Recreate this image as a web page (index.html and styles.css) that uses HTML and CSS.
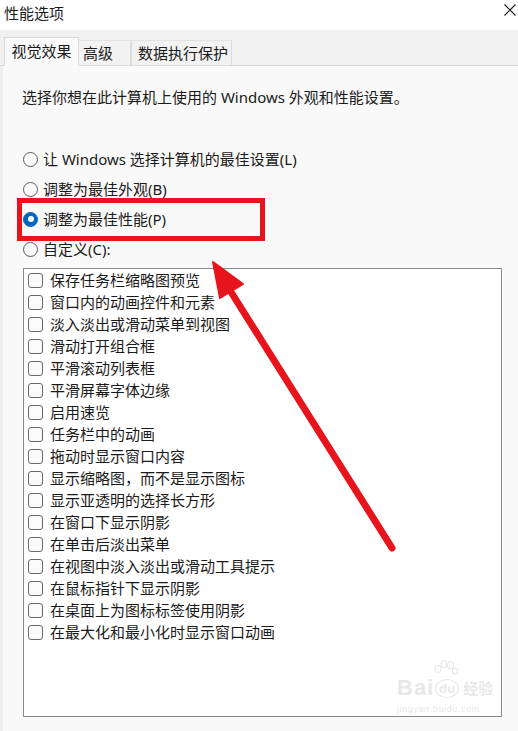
FILE: index.html
```html
<!DOCTYPE html>
<html lang="zh-CN">
<head>
<meta charset="utf-8">
<title>性能选项</title>
<link rel="stylesheet" href="styles.css">
</head>
<body>
<div class="window">
  <div class="titlebar">
    <span class="title">性能选项</span>
    <svg class="close" width="12" height="12" viewBox="0 0 12 12"><path d="M0.5 0.5L11.5 11.5M11.5 0.5L0.5 11.5" stroke="#1a1a1a" stroke-width="1.1" fill="none"/></svg>
  </div>
  <div class="tabs">
    <div class="tab active">视觉效果</div>
    <div class="tab t2">高级</div>
    <div class="tab t3">数据执行保护</div>
  </div>
  <div class="panel">
    <p class="desc">选择你想在此计算机上使用的 Windows 外观和性能设置。</p>
    <div class="radios">
      <div class="radio"><span class="dot"></span><span>让 Windows 选择计算机的最佳设置(L)</span></div>
      <div class="radio"><span class="dot"></span><span>调整为最佳外观(B)</span></div>
      <div class="radio"><span class="dot checked"></span><span>调整为最佳性能(P)</span></div>
      <div class="radio"><span class="dot"></span><span>自定义(C):</span></div>
    </div>
    <div class="listbox">
      <div class="item"><span class="box"></span>保存任务栏缩略图预览</div>
      <div class="item"><span class="box"></span>窗口内的动画控件和元素</div>
      <div class="item"><span class="box"></span>淡入淡出或滑动菜单到视图</div>
      <div class="item"><span class="box"></span>滑动打开组合框</div>
      <div class="item"><span class="box"></span>平滑滚动列表框</div>
      <div class="item"><span class="box"></span>平滑屏幕字体边缘</div>
      <div class="item"><span class="box"></span>启用速览</div>
      <div class="item"><span class="box"></span>任务栏中的动画</div>
      <div class="item"><span class="box"></span>拖动时显示窗口内容</div>
      <div class="item"><span class="box"></span>显示缩略图，而不是显示图标</div>
      <div class="item"><span class="box"></span>显示亚透明的选择长方形</div>
      <div class="item"><span class="box"></span>在窗口下显示阴影</div>
      <div class="item"><span class="box"></span>在单击后淡出菜单</div>
      <div class="item"><span class="box"></span>在视图中淡入淡出或滑动工具提示</div>
      <div class="item"><span class="box"></span>在鼠标指针下显示阴影</div>
      <div class="item"><span class="box"></span>在桌面上为图标标签使用阴影</div>
      <div class="item"><span class="box"></span>在最大化和最小化时显示窗口动画</div>
    </div>
  </div>

  <div class="highlight"></div>
  <svg class="arrow" width="518" height="731" viewBox="0 0 518 731">
    <line x1="392" y1="548" x2="226" y2="284" stroke="#e8141c" stroke-width="7" stroke-linecap="round"/>
    <polygon points="213,262 243,284 220,298" fill="#e8141c" stroke="#e8141c" stroke-width="2" stroke-linejoin="round"/>
  </svg>

  <div class="watermark">
    <svg class="paw" width="30" height="24" viewBox="0 0 30 24">
      <g fill="none" stroke="#e6e6e6" stroke-width="1.2">
        <ellipse cx="8" cy="10" rx="3" ry="3.5"/>
        <ellipse cx="14" cy="5" rx="3" ry="3.5"/>
        <ellipse cx="20.5" cy="6" rx="3" ry="3.5"/>
        <ellipse cx="25" cy="12" rx="2.6" ry="3"/>
      </g>
    </svg>
    <div class="wm-main"><span>Bai</span><span class="du">du</span><span class="jy">经验</span></div>
    <div class="wm-url">jingyan.baidu.com</div>
  </div>
</div>
</body>
</html>
```

FILE: styles.css
```css
* { box-sizing: border-box; }

html, body {
  margin: 0;
  padding: 0;
  background: #ffffff;
}

body {
  font-family: "Noto Sans", "Noto Sans CJK SC", sans-serif;
  font-size: 15px;
  color: #1a1a1a;
}

.window {
  position: relative;
  width: 518px;
  height: 731px;
  display: flex;
  flex-direction: column;
  overflow: hidden;
}

.titlebar {
  height: 30px;
  background: #ffffff;
  display: flex;
  justify-content: space-between;
  align-items: flex-start;
  padding: 3px 2px 0 4px;
  flex: none;
}

.title {
  line-height: 20px;
  font-size: 15px;
}

.close {
  margin-top: 1px;
}

.tabs {
  height: 36px;
  background: #f0f0f0;
  border-bottom: 1px solid #dadada;
  display: flex;
  align-items: flex-end;
  padding-left: 4px;
  flex: none;
}

.tab {
  height: 26px;
  line-height: 24px;
  font-size: 15px;
  background: #f2f2f2;
  border-top: 1px solid #e2e2e2;
  border-right: 1px solid #dcdcdc;
  margin-bottom: -1px;
  border-bottom: 1px solid #dadada;
}

.tab.active {
  width: 75px;
  height: 29px;
  line-height: 26px;
  text-align: center;
  background: #f9f9f9;
  border: 1px solid #d9d9d9;
  border-bottom: 1px solid #f9f9f9;
}

.tab.t2 {
  width: 52px;
  padding-left: 4px;
}

.tab.t3 {
  width: 101px;
  padding-left: 6px;
  border-left: 1px solid #dcdcdc;
}

.panel {
  flex: 1;
  background: #f9f9f9;
  border-left: 3px solid #efefef;
  padding: 21px 0 0 19px;
}

.desc {
  margin: 0;
  line-height: 20px;
}

.radios {
  margin-top: 37px;
  display: flex;
  flex-direction: column;
}

.radio {
  height: 30px;
  display: flex;
  align-items: center;
  gap: 5px;
  line-height: 20px;
}

.dot {
  width: 15px;
  height: 15px;
  border-radius: 50%;
  border: 1px solid #5a5a5a;
  background: #fbfbfb;
  margin-left: 1px;
  flex: none;
  display: flex;
  align-items: center;
  justify-content: center;
}

.dot.checked {
  background: #0067c0;
  border-color: #0067c0;
}

.dot.checked::after {
  content: "";
  width: 6px;
  height: 6px;
  border-radius: 50%;
  background: #ffffff;
}

.listbox {
  margin-top: 4px;
  margin-left: 1px;
  width: 479px;
  height: 449px;
  background: #ffffff;
  border: 1px solid #8a8a8a;
  padding: 0 0 0 4px;
}

.item {
  height: 22px;
  display: flex;
  align-items: center;
  gap: 7px;
  line-height: 20px;
}

.box {
  width: 15px;
  height: 15px;
  border: 1px solid #6a6a6a;
  border-radius: 3px;
  background: #fafafa;
  flex: none;
}

.highlight {
  position: absolute;
  left: 17px;
  top: 198px;
  width: 248px;
  height: 43px;
  border: 5px solid #e8141c;
}

.arrow {
  position: absolute;
  left: 0;
  top: 0;
  pointer-events: none;
}

.watermark {
  position: absolute;
  left: 397px;
  top: 676px;
  width: 110px;
  white-space: nowrap;
  color: #e8e8e8;
  font-family: "Liberation Sans", sans-serif;
}

.paw {
  position: absolute;
  left: 33px;
  top: -17px;
}

.wm-main {
  display: flex;
  align-items: center;
  font-size: 22px;
  font-weight: bold;
  line-height: 24px;
  letter-spacing: 1px;
}

.wm-main .du {
  font-size: 13px;
  border: 1.5px solid #e8e8e8;
  border-radius: 50%;
  padding: 0 3px;
  line-height: 17px;
  margin: 0 4px 0 1px;
  letter-spacing: 0;
}

.wm-main .jy {
  font-family: "Noto Sans CJK SC", sans-serif;
  font-size: 15px;
  font-weight: bold;
  letter-spacing: 0;
}

.wm-url {
  font-size: 9px;
  line-height: 12px;
  margin-top: 3px;
  letter-spacing: 0.6px;
}
```
